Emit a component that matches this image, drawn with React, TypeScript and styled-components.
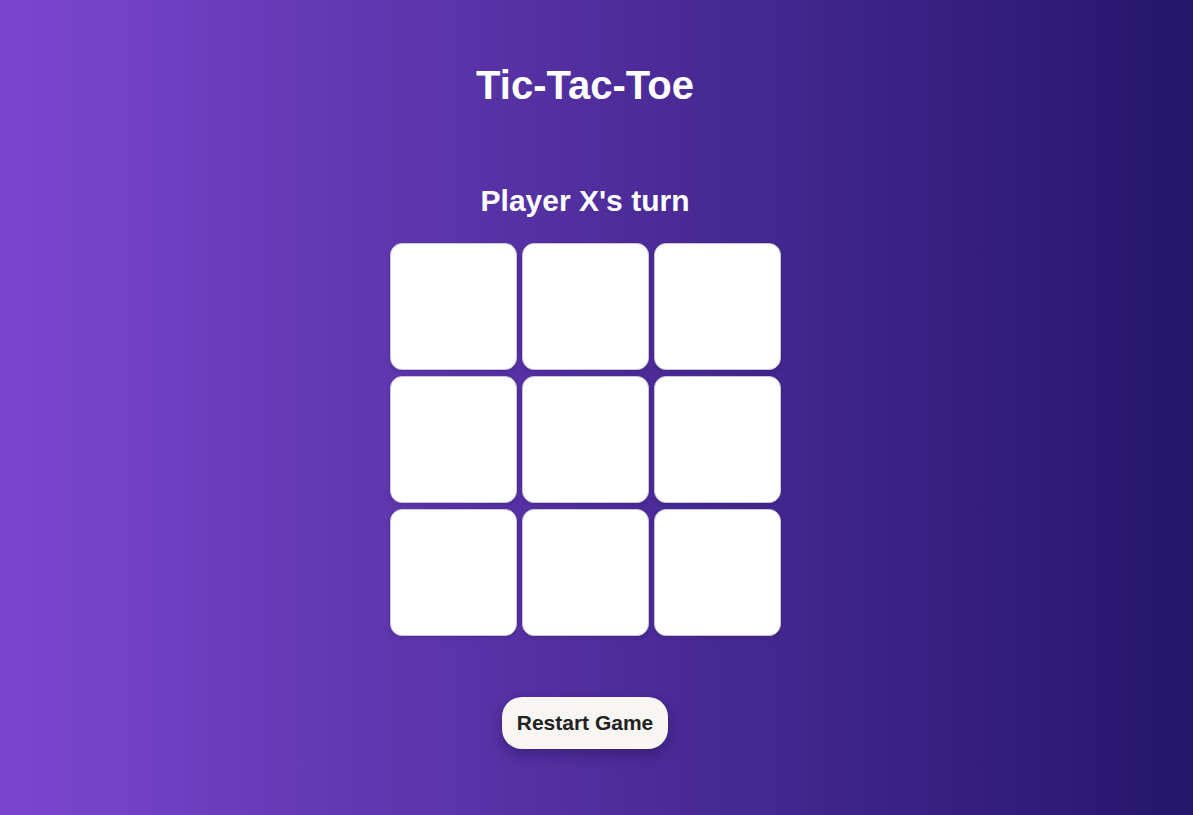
import React, { useState } from "react";
import styled, { createGlobalStyle } from "styled-components";

const GlobalStyle = createGlobalStyle`
  html, body { margin: 0; padding: 0; }
  body {
    font-family: "Liberation Sans", Arial, sans-serif;
    min-height: 100vh;
    background: linear-gradient(to right, #7b46cf, #24166b);
  }
`;

const Page = styled.main`
  min-height: 100vh;
  display: flex;
  flex-direction: column;
  align-items: center;
  color: #ffffff;
  box-sizing: border-box;
  padding: 62px 23px 0 0;
`;

const Title = styled.h1`
  margin: 0;
  font-size: 40px;
  font-weight: 700;
  line-height: 46px;
`;

const Status = styled.h2`
  margin: 76px 0 0;
  font-size: 30px;
  font-weight: 700;
  line-height: 34px;
`;

const Board = styled.div`
  margin-top: 25px;
  display: grid;
  grid-template-columns: repeat(3, 127px);
  grid-template-rows: repeat(3, 127px);
  column-gap: 5px;
  row-gap: 6px;
`;

const Cell = styled.button`
  background: #ffffff;
  border: 1px solid #c9c3dc;
  border-radius: 12px;
  box-shadow: 0 2px 4px rgba(0, 0, 0, 0.12);
  font-family: inherit;
  font-size: 64px;
  font-weight: 700;
  color: #3b2a8a;
  cursor: pointer;
  padding: 0;
`;

const RestartButton = styled.button`
  margin-top: 61px;
  height: 52px;
  padding: 0 15px;
  border: none;
  border-radius: 20px;
  background: #f8f6f2;
  color: #222222;
  font-family: "Liberation Sans", Arial, sans-serif;
  font-size: 21px;
  font-weight: 700;
  box-shadow: 0 6px 14px rgba(20, 10, 60, 0.35);
  cursor: pointer;
`;

export default function App() {
  const [cells, setCells] = useState<(string | null)[]>(Array(9).fill(null));
  const [xTurn, setXTurn] = useState(true);

  const play = (i: number) => {
    if (cells[i]) return;
    const next = cells.slice();
    next[i] = xTurn ? "X" : "O";
    setCells(next);
    setXTurn(!xTurn);
  };

  return (
    <>
      <GlobalStyle />
      <Page>
        <Title>Tic-Tac-Toe</Title>
        <Status>Player {xTurn ? "X" : "O"}'s turn</Status>
        <Board>
          {cells.map((c, i) => (
            <Cell key={i} onClick={() => play(i)}>
              {c}
            </Cell>
          ))}
        </Board>
        <RestartButton
          onClick={() => {
            setCells(Array(9).fill(null));
            setXTurn(true);
          }}
        >
          Restart Game
        </RestartButton>
      </Page>
    </>
  );
}
